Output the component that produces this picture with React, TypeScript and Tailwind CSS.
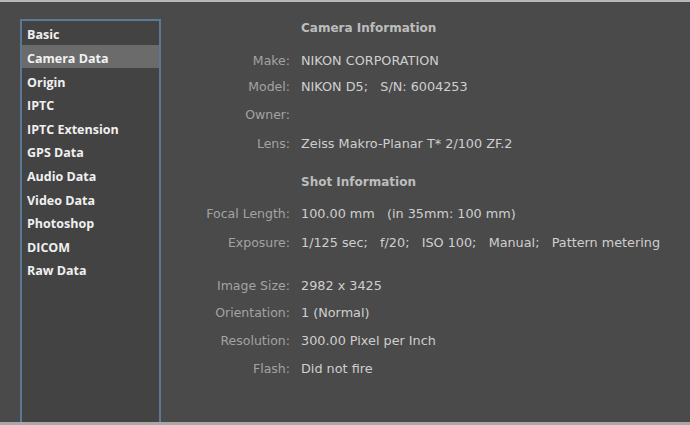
import React from "react";

const categories = [
  "Basic",
  "Camera Data",
  "Origin",
  "IPTC",
  "IPTC Extension",
  "GPS Data",
  "Audio Data",
  "Video Data",
  "Photoshop",
  "DICOM",
  "Raw Data",
];

type Row =
  | { kind: "header"; text: string; mt: string }
  | { kind: "field"; label: string; value: string; mt: string };

const rows: Row[] = [
  { kind: "header", text: "Camera Information", mt: "mt-0" },
  { kind: "field", label: "Make:", value: "NIKON CORPORATION", mt: "mt-[13px]" },
  { kind: "field", label: "Model:", value: "NIKON D5;   S/N: 6004253", mt: "mt-[6px]" },
  { kind: "field", label: "Owner:", value: "", mt: "mt-[8px]" },
  { kind: "field", label: "Lens:", value: "Zeiss Makro-Planar T* 2/100 ZF.2", mt: "mt-[9px]" },
  { kind: "header", text: "Shot Information", mt: "mt-[18px]" },
  { kind: "field", label: "Focal Length:", value: "100.00 mm   (in 35mm: 100 mm)", mt: "mt-[12px]" },
  { kind: "field", label: "Exposure:", value: "1/125 sec;   f/20;   ISO 100;   Manual;   Pattern metering", mt: "mt-[9px]" },
  { kind: "field", label: "Image Size:", value: "2982 x 3425", mt: "mt-[23px]" },
  { kind: "field", label: "Orientation:", value: "1 (Normal)", mt: "mt-[7px]" },
  { kind: "field", label: "Resolution:", value: "300.00 Pixel per Inch", mt: "mt-[8px]" },
  { kind: "field", label: "Flash:", value: "Did not fire", mt: "mt-[8px]" },
];

export default function App() {
  return (
    <div
      className="w-[690px] h-[425px] overflow-hidden bg-[#4a4a4a] border-t-2 border-t-[#b8b8b8] border-b-[3px] border-b-[#a8a8a8] flex"
      style={{ fontFamily: '"DejaVu Sans", "Liberation Sans", sans-serif' }}
    >
      {/* Category list */}
      <aside
        className="ml-[20px] mt-[17px] w-[141px] h-[420px] flex-shrink-0 bg-[#434343] border-2 border-[#5b7894]"
        style={{ fontFamily: '"Open Sans", "DejaVu Sans", sans-serif' }}
      >
        {categories.map((c) => (
          <div
            key={c}
            className={
              "h-[23.6px] flex items-center pl-[5px] pt-[6px] text-[12.5px] font-bold " +
              (c === "Camera Data" ? "bg-[#6b6b6b] text-[#f2f2f2]" : "text-[#f0f0f0]")
            }
          >
            {c}
          </div>
        ))}
      </aside>

      {/* Metadata */}
      <div className="flex-1 pt-[16px] pl-[9px]">
        {rows.map((r, i) =>
          r.kind === "header" ? (
            <div key={i} className={"flex items-center h-5 " + r.mt}>
              <div className="w-[120px]" />
              <div className="pl-[11px] text-[12px] font-bold text-[#bdbdbd]">{r.text}</div>
            </div>
          ) : (
            <div key={i} className={"flex items-center h-5 " + r.mt}>
              <div className="w-[120px] text-right text-[12.5px] text-[#a3a3a3]">{r.label}</div>
              <div className="pl-[11px] text-[12.8px] text-[#cfcfcf] whitespace-pre">{r.value}</div>
            </div>
          )
        )}
      </div>
    </div>
  );
}
